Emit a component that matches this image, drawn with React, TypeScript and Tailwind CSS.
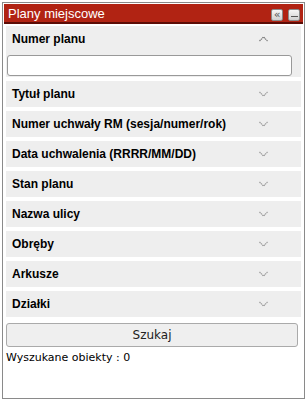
import React from "react";

const Chevron = ({ up = false }: { up?: boolean }) => (
  <svg width="9" height="6" viewBox="0 0 9 6" className="block">
    {up ? (
      <polyline points="0.5,5 4.5,1 8.5,5" fill="none" stroke="#777" strokeWidth="1.2" strokeDasharray="1.4 0.6" />
    ) : (
      <polyline points="0.5,1 4.5,5 8.5,1" fill="none" stroke="#9a9a9a" strokeWidth="1.2" strokeDasharray="1.4 0.6" />
    )}
  </svg>
);

const titleFont = { fontFamily: "'Liberation Sans', Arial, sans-serif" };

const Section = ({ title }: { title: string }) => (
  <div className="bg-[#eeeeee] mb-[4px]">
    <div className="h-[26px] flex items-center justify-between pl-[6px] pr-[33px]">
      <span className="font-bold text-[12px] text-black leading-none" style={titleFont}>{title}</span>
      <Chevron />
    </div>
  </div>
);

export default function App() {
  const sections = [
    "Tytuł planu",
    "Numer uchwały RM (sesja/numer/rok)",
    "Data uchwalenia (RRRR/MM/DD)",
    "Stan planu",
    "Nazwa ulicy",
    "Obręby",
    "Arkusze",
    "Działki",
  ];
  return (
    <div className="w-[308px] h-[402px] bg-white pt-[2px] pl-[2px]" style={{ fontFamily: "'DejaVu Sans', Verdana, sans-serif" }}>
      <div className="w-[303px] h-[397px] border border-[#8a8a8a] bg-white p-[1px] flex flex-col">
        <div className="h-[20px] bg-[#b12313] border-b-2 border-[#5c0c06] flex items-center justify-between pl-[4px] pr-[3px]">
          <span className="text-white text-[13px] leading-none" style={titleFont}>Plany miejscowe</span>
          <div className="flex gap-[5px] items-center self-end mb-[1px]">
            <div className="w-[12px] h-[12px] border border-[#8a8a8a] rounded-[2px] bg-gradient-to-b from-[#f6f6f6] to-[#d0d0d0] flex items-center justify-center">
              <span className="text-[#555] text-[11px] leading-none -mt-[2px]">«</span>
            </div>
            <div className="w-[12px] h-[12px] border border-[#8a8a8a] rounded-[2px] bg-gradient-to-b from-[#f6f6f6] to-[#d0d0d0] flex items-end justify-center pb-[3px]">
              <div className="w-[7px] h-[1px] bg-[#555]" />
            </div>
          </div>
        </div>
        <div className="px-[2px] pt-[2px] flex flex-col">
          <div className="bg-[#eeeeee] mb-[4px] pb-[1px]">
            <div className="h-[26px] flex items-center justify-between pl-[6px] pr-[33px]">
              <span className="font-bold text-[12px] text-black leading-none" style={titleFont}>Numer planu</span>
              <Chevron up />
            </div>
            <div className="pl-[1px] pr-[9px]">
              <input className="w-full h-[21px] bg-white border border-[#999] rounded-[3px] outline-none px-[3px] text-[11px]" />
            </div>
          </div>
          {sections.map((s) => (
            <Section key={s} title={s} />
          ))}
          <button className="mt-[2px] h-[24px] w-[292px] bg-[#efefef] border border-[#aaaaaa] rounded-[3px] text-[12px] text-[#222] flex items-center justify-center">
            Szukaj
          </button>
          <div className="mt-[4px] text-[11px] text-black leading-[14px]">Wyszukane obiekty : 0</div>
        </div>
      </div>
    </div>
  );
}
